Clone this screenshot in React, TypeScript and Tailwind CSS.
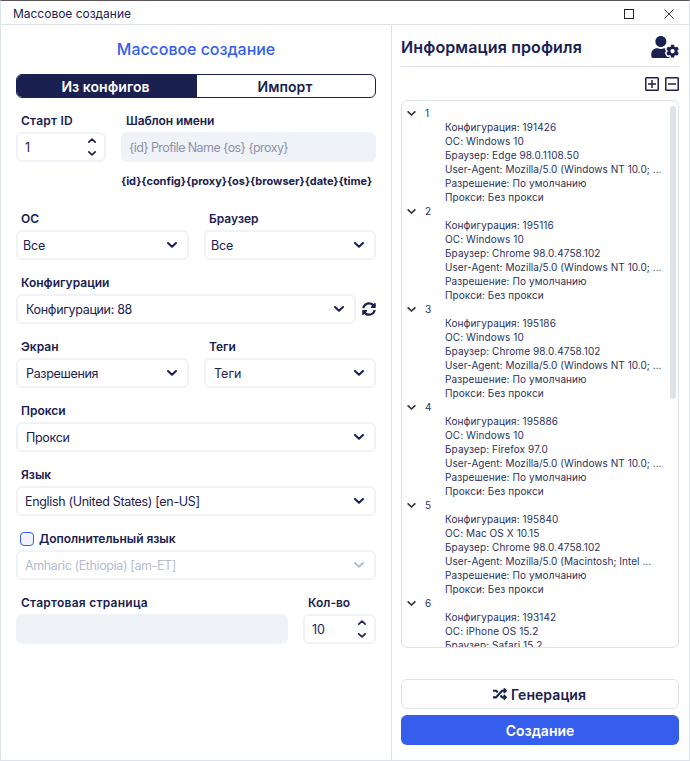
import type { ReactNode } from "react";
import { FaRandom, FaSyncAlt, FaUserCog } from "react-icons/fa";

function Chevron({ up = false, small = false, className = "" }: { up?: boolean; small?: boolean; className?: string }) {
  return (
    <svg
      viewBox="0 0 10 6"
      className={`${small ? "h-[5px] w-2" : "h-1.5 w-2.5"} ${up ? "rotate-180" : ""} shrink-0 ${className}`}
      fill="none"
      stroke="currentColor"
      strokeWidth="2"
      strokeLinecap="round"
      strokeLinejoin="round"
    >
      <path d="M1 1 5 4.8 9 1" />
    </svg>
  );
}

function Label({ children, className = "" }: { children: ReactNode; className?: string }) {
  return <div className={`h-4 pl-[5px] text-[12px] leading-4 font-semibold whitespace-nowrap ${className}`}>{children}</div>;
}

function Select({
  value,
  pad = "pl-2",
  className = "w-full",
  text = "tracking-[-0.32px]",
  disabled = false,
}: {
  value: string;
  pad?: string;
  className?: string;
  text?: string;
  disabled?: boolean;
}) {
  return (
    <div
      className={`flex h-[30px] items-center justify-between rounded-md border-2 border-[#eff2f7] pr-[9px] ${pad} ${className} ${disabled ? "text-[#b4bdcd]" : ""}`}
    >
      <span className={`pt-px text-[12.5px] leading-4 whitespace-nowrap ${text}`}>{value}</span>
      <Chevron className="mr-px" />
    </div>
  );
}

function Spinner({ value, className, pad }: { value: string; className: string; pad: string }) {
  return (
    <div className={`flex h-[30px] items-center justify-between rounded-md border-2 border-[#eff2f7] ${pad} ${className}`}>
      <span className="pt-px text-[12.5px] leading-4">{value}</span>
      <span className="flex flex-col gap-2">
        <Chevron up small />
        <Chevron small />
      </span>
    </div>
  );
}

function BoxIcon({ plus = false }: { plus?: boolean }) {
  return (
    <svg viewBox="0 0 14 14" className="size-3.5" fill="none" stroke="currentColor" strokeWidth="1.5">
      <rect x="0.75" y="0.75" width="12.5" height="12.5" rx="0.8" />
      <path d={plus ? "M3 7h8M7 3v8" : "M3 7h8"} />
    </svg>
  );
}

const WIN = "User-Agent: Mozilla/5.0 (Windows NT 10.0; ...";
const MAC = "User-Agent: Mozilla/5.0 (Macintosh; Intel ...";

type Profile = { config: string; os: string; browser: string; ua?: string };

const profiles: Profile[] = [
  { config: "191426", os: "Windows 10", browser: "Edge 98.0.1108.50", ua: WIN },
  { config: "195116", os: "Windows 10", browser: "Chrome 98.0.4758.102", ua: WIN },
  { config: "195186", os: "Windows 10", browser: "Chrome 98.0.4758.102", ua: WIN },
  { config: "195886", os: "Windows 10", browser: "Firefox 97.0", ua: WIN },
  { config: "195840", os: "Mac OS X 10.15", browser: "Chrome 98.0.4758.102", ua: MAC },
  { config: "193142", os: "iPhone OS 15.2", browser: "Safari 15.2" },
];

export default function App() {
  return (
    <div className="flex h-[761px] w-[690px] flex-col overflow-hidden border border-[#dde3e9] border-t-[#5c5454] bg-white font-['Inter','Noto_Sans',sans-serif] text-[#1a2150]">
      <header className="flex h-6 shrink-0 items-center justify-between border-b border-[#dde3e9] pr-[15px] pl-3">
        <span className="pt-0.5 text-[12px] leading-4 tracking-[-0.02px]">Массовое создание</span>
        <div className="flex items-center gap-[30px] pt-0.5 text-[#222222]">
          <svg viewBox="0 0 10 10" className="size-2.5" fill="none" stroke="currentColor">
            <rect x="0.5" y="0.5" width="9" height="9" />
          </svg>
          <svg viewBox="0 0 10 10" className="size-2.5" fill="none" stroke="currentColor" strokeWidth="0.9">
            <path d="M0.5 0.5 9.5 9.5M9.5 0.5 0.5 9.5" />
          </svg>
        </div>
      </header>

      <div className="flex min-h-0 flex-1">
        <main className="flex w-[391px] flex-col border-r border-[#dde3e9] pr-[15px] pl-[15px]">
          <h1 className="mt-3.5 h-5 text-center text-[16px] leading-5 font-medium tracking-[-0.05px] text-[#355eed]">
            Массовое создание
          </h1>

          <div className="mt-[15px] flex h-6 shrink-0 overflow-hidden rounded-md border border-[#1a2150] text-[14px] leading-[24px] font-semibold">
            <div className="w-[180px] bg-[#1a2150] pr-[3px] text-center tracking-[0.05px] text-white">Из конфигов</div>
            <div className="flex-1 pr-0.5 text-center tracking-[0.05px]">Импорт</div>
          </div>

          <div className="mt-[15px] flex gap-[15px]">
            <div className="w-[90px]">
              <Label className="tracking-[0.25px]">Старт ID</Label>
              <Spinner value="1" className="mt-[3px] w-[90px]" pad="pr-2 pl-[7px]" />
            </div>
            <div className="flex-1">
              <Label className="tracking-[-0.1px]">Шаблон имени</Label>
              <div className="mt-[3px] flex h-[30px] items-center rounded-md bg-[#eff2f7] pt-px pl-2 text-[12.5px] leading-4 tracking-[-0.58px] text-[#8d93ab]">
                {"{id} Profile Name {os} {proxy}"}
              </div>
              <div className="mt-[11px] mb-px h-4 text-[11px] leading-4 font-bold tracking-[-0.02px] whitespace-nowrap">
                {"{id}{config}{proxy}{os}{browser}{date}{time}"}
              </div>
            </div>
          </div>

          <div className="mt-[21px] flex gap-[15px]">
            <div className="w-[173px]">
              <Label>ОС</Label>
              <Select value="Все" pad="pl-[5px]" className="mt-[3px]" text="tracking-[-0.1px]" />
            </div>
            <div className="flex-1">
              <Label>Браузер</Label>
              <Select value="Все" pad="pl-[5px]" className="mt-[3px]" text="tracking-[-0.1px]" />
            </div>
          </div>

          <Label className="mt-[15px]">Конфигурации</Label>
          <div className="mt-[3px] flex items-center gap-1.5">
            <Select value="Конфигурации: 88" className="w-[340px]" />
            <FaSyncAlt className="size-3.5" />
          </div>

          <div className="mt-[15px] flex gap-[15px]">
            <div className="w-[173px]">
              <Label>Экран</Label>
              <Select value="Разрешения" className="mt-[3px]" />
            </div>
            <div className="flex-1">
              <Label>Теги</Label>
              <Select value="Теги" className="mt-[3px]" text="tracking-[0px]" />
            </div>
          </div>

          <Label className="mt-[15px]">Прокси</Label>
          <Select value="Прокси" className="mt-[3px]" />

          <Label className="mt-[15px]">Язык</Label>
          <Select value="English (United States) [en-US]" pad="pl-[7px]" className="mt-[3px]" />

          <div className="mt-[15px] flex h-4 items-center pl-1">
            <span className="-mt-px size-3.5 rounded border border-[#355eed] bg-[#eff2f7]" />
            <Label className="tracking-[-0.03px]">Дополнительный язык</Label>
          </div>
          <Select value="Amharic (Ethiopia) [am-ET]" pad="pl-[7px]" className="mt-[3px]" text="tracking-[-0.38px]" disabled />

          <div className="mt-[15px] flex gap-[15px]">
            <div className="w-[272px]">
              <Label className="tracking-[0.25px]">Стартовая страница</Label>
              <div className="mt-[3px] h-[30px] rounded-md bg-[#eff2f7]" />
            </div>
            <div className="flex-1">
              <Label>Кол-во</Label>
              <Spinner value="10" className="mt-[3px]" pad="pr-2 pl-[7px]" />
            </div>
          </div>
        </main>

        <aside className="flex flex-1 flex-col pr-[10px] pl-[9px]">
          <div className="flex h-[42px] shrink-0 items-center justify-between border-b border-[#dde3e9]">
            <h2 className="mt-[3px] text-[16px] leading-5 font-semibold tracking-[0.12px]">Информация профиля</h2>
            <FaUserCog className="mt-0.5 h-[22px] w-[28px]" />
          </div>
          <div className="mt-[10px] flex h-3.5 shrink-0 justify-end gap-1.5">
            <BoxIcon plus />
            <BoxIcon />
          </div>

          <div className="mt-[9px] flex h-[548px] shrink-0 overflow-hidden rounded-md border border-[#dde3e9] pt-[5px] pr-0.5">
            <div className="min-w-0 flex-1 text-[10px] leading-[14px] tracking-[0.1px] whitespace-nowrap text-[#2b315c]">
              {profiles.map((p, i) => (
                <div key={p.config}>
                  <div className="flex h-3.5 items-center gap-[9px] pl-[5px]">
                    <Chevron small className="w-[9px] text-[#333333]" />
                    <span>{i + 1}</span>
                  </div>
                  <div className="pl-[43px]">
                    <div>Конфигурация: {p.config}</div>
                    <div>ОС: {p.os}</div>
                    <div>Браузер: {p.browser}</div>
                    {p.ua && (
                      <>
                        <div className="tracking-[0.04px]">{p.ua}</div>
                        <div>Разрешение: По умолчанию</div>
                        <div>Прокси: Без прокси</div>
                      </>
                    )}
                  </div>
                </div>
              ))}
            </div>
            <div className="h-[293px] w-1.5 shrink-0 rounded-full bg-[#dde3e9]" />
          </div>

          <button className="mt-[31px] flex h-[30px] shrink-0 items-center justify-center gap-1 rounded-md border border-[#dde3e9] pr-px text-[14px] leading-5 font-semibold tracking-[0.05px]">
            <FaRandom className="size-3.5" />
            <span className="pt-0.5">Генерация</span>
          </button>
          <button className="mt-1.5 h-[30px] shrink-0 rounded-md bg-[#355eed] pt-0.5 text-[14px] leading-[28px] font-semibold text-white">
            Создание
          </button>
        </aside>
      </div>
    </div>
  );
}
